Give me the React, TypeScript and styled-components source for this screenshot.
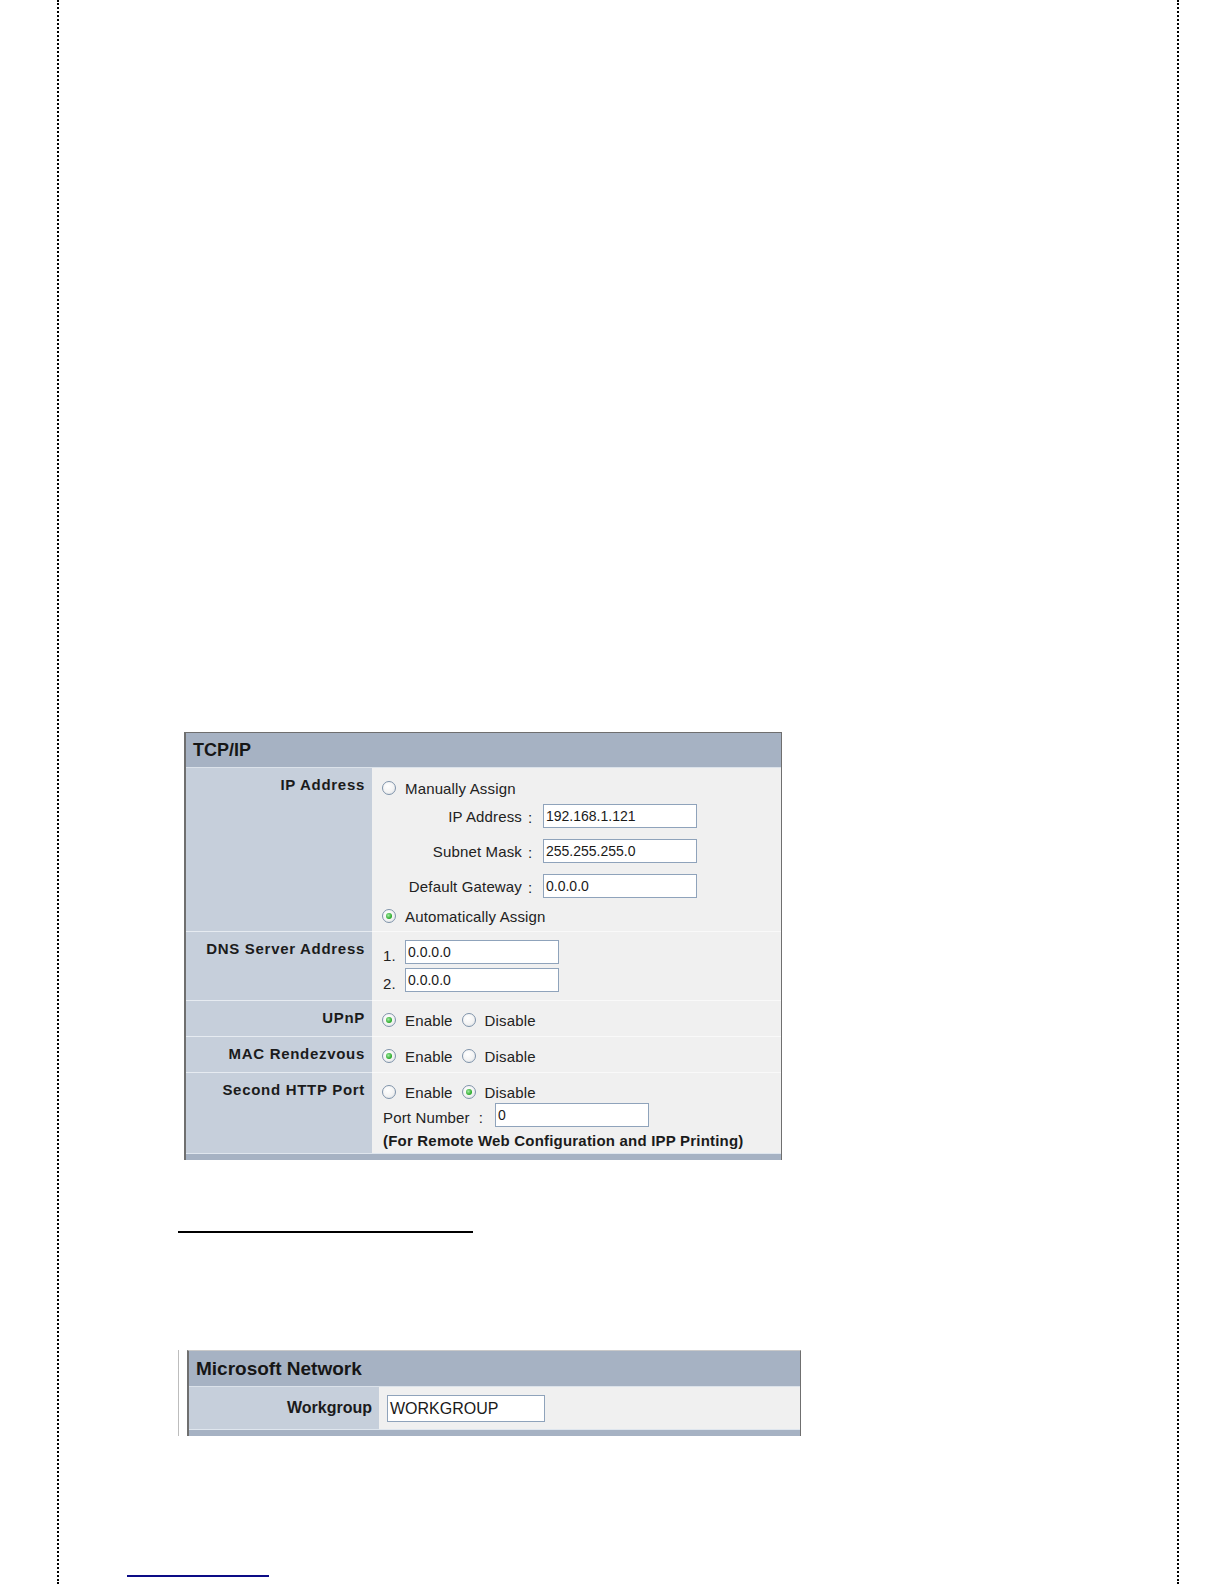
import React from "react";
import styled, { createGlobalStyle } from "styled-components";

const GlobalStyle = createGlobalStyle`
  html, body {
    margin: 0;
    padding: 0;
    background: #fff;
  }
  body {
    font-family: "Liberation Sans", Arial, sans-serif;
    color: #222;
  }
`;

const Sheet = styled.div`
  box-sizing: border-box;
  margin-left: 57px;
  width: 1122px;
  height: 1584px;
  border-left: 2px dotted #000;
  border-right: 2px dotted #000;
  padding: 732px 0 0 68px;
  overflow: hidden;
`;

const Panel = styled.div<{ $w: number; $ml: number; $topColor?: string }>`
  box-sizing: border-box;
  width: ${(p) => p.$w}px;
  margin-left: ${(p) => p.$ml}px;
  border: 1px solid #6f6f6f;
  border-left-width: 2px;
  border-top-color: ${(p) => p.$topColor || "#6f6f6f"};
  border-bottom: none;
`;

const TitleBar = styled.div<{ $h: number; $size: number }>`
  height: ${(p) => p.$h}px;
  line-height: ${(p) => p.$h}px;
  padding-left: 7px;
  background: #a6b2c3;
  border-bottom: 1px solid #dbe2ea;
  font-size: ${(p) => p.$size}px;
  font-weight: 700;
  color: #161616;
`;

const LabelCell = styled.div<{ $pt?: number; $size?: number; $ls?: number }>`
  background: #c6cfdb;
  text-align: right;
  padding: ${(p) => p.$pt ?? 8}px 7px 0 0;
  font-size: ${(p) => p.$size ?? 15}px;
  letter-spacing: ${(p) => p.$ls ?? 0.7}px;
  line-height: 18px;
  font-weight: 700;
  color: #1b1b1b;
  white-space: nowrap;
`;

const ValueCell = styled.div<{ $pad: string }>`
  background: #f0f0f0;
  padding: ${(p) => p.$pad};
  font-size: 15px;
  letter-spacing: 0.15px;
  color: #222;
`;

const Row = styled.div<{ $label: number }>`
  display: grid;
  grid-template-columns: ${(p) => p.$label}px 1fr;

  & + & > ${LabelCell} {
    border-top: 1px solid #e6ebf1;
  }
  & + & > ${ValueCell} {
    border-top: 1px solid #f9f9f9;
  }
`;

const BottomBar = styled.div`
  height: 6px;
  border-top: 1px solid #dfe6ee;
  background: #a6b2c3;
`;

const RadioLine = styled.div<{ $mt?: number }>`
  display: flex;
  align-items: center;
  height: 22px;
  margin-top: ${(p) => p.$mt ?? 0}px;
`;

const Option = styled.label`
  display: inline-flex;
  align-items: center;
  gap: 9px;
  margin-right: 10px;
  white-space: nowrap;
`;

const RadioDot = styled.span<{ $on?: boolean }>`
  position: relative;
  flex: none;
  box-sizing: border-box;
  width: 14px;
  height: 14px;
  margin-left: -1px;
  border-radius: 50%;
  border: 1px solid #7f93aa;
  background: radial-gradient(circle at 40% 35%, #fff 0, #f3f3f3 55%, #d6dbe1 100%);

  &::after {
    content: "";
    display: ${(p) => (p.$on ? "block" : "none")};
    position: absolute;
    left: 3px;
    top: 3px;
    width: 6px;
    height: 6px;
    border-radius: 50%;
    background: radial-gradient(circle at 40% 40%, #a4eaa4 0, #22a622 70%);
  }
`;

const FieldGrid = styled.div`
  display: grid;
  grid-template-columns: 139px 21px 154px;
  row-gap: 11px;
  align-items: center;
  margin-top: 5px;
`;

const FieldLabel = styled.span`
  text-align: right;
  white-space: nowrap;
`;

const Colon = styled.span<{ $m?: string }>`
  padding: ${(p) => p.$m ?? "4px 0 0 6px"};
  line-height: 18px;
`;

const TextBox = styled.div<{ $w: number; $h?: number; $size?: number }>`
  box-sizing: border-box;
  width: ${(p) => p.$w}px;
  height: ${(p) => p.$h ?? 24}px;
  line-height: ${(p) => (p.$h ?? 24) - 2}px;
  padding-left: 2px;
  border: 1px solid #8fa3bb;
  background: #fff;
  font-size: ${(p) => p.$size ?? 14}px;
  letter-spacing: 0;
  color: #1a1a1a;
  white-space: nowrap;
  overflow: hidden;
`;

const DnsLine = styled.div`
  display: flex;
  align-items: flex-end;

  & + & {
    margin-top: 4px;
  }
`;

const Num = styled.span`
  width: 22px;
  line-height: 16px;
`;

const PortLine = styled.div`
  display: flex;
  align-items: flex-end;
`;

const PortText = styled.span`
  line-height: 18px;
  white-space: nowrap;
`;

const Note = styled.div`
  margin-top: 3px;
  height: 22px;
  line-height: 22px;
  font-size: 15px;
  letter-spacing: 0.2px;
  font-weight: 700;
  color: #1b1b1b;
  white-space: nowrap;
`;

const Rule = styled.div`
  margin: 71px 0 0 51px;
  width: 295px;
  height: 2px;
  background: #000;
`;

const Figure = styled.div`
  margin: 117px 0 0 51px;
  padding-left: 8px;
  border-left: 1px solid #bdbdbd;
  width: fit-content;
`;

const LinkLine = styled.div`
  margin-top: 139px;
  width: 142px;
  height: 2px;
  background: #0c0c86;
`;

const Radio = ({ on, label }: { on?: boolean; label: string }) => (
  <Option>
    <RadioDot $on={on} />
    {label}
  </Option>
);

const fields = [
  { label: "IP Address", value: "192.168.1.121" },
  { label: "Subnet Mask", value: "255.255.255.0" },
  { label: "Default Gateway", value: "0.0.0.0" },
];

const App: React.FC = () => (
  <>
    <GlobalStyle />
    <Sheet>
      <Panel $w={598} $ml={57}>
        <TitleBar $h={34} $size={18}>
          TCP/IP
        </TitleBar>

        <Row $label={186}>
          <LabelCell>IP Address</LabelCell>
          <ValueCell $pad="9px 0 4px 11px">
            <RadioLine>
              <Radio label="Manually Assign" />
            </RadioLine>
            <FieldGrid>
              {fields.map((f) => (
                <React.Fragment key={f.label}>
                  <FieldLabel>{f.label}</FieldLabel>
                  <Colon>:</Colon>
                  <TextBox $w={154}>{f.value}</TextBox>
                </React.Fragment>
              ))}
            </FieldGrid>
            <RadioLine $mt={7}>
              <Radio on label="Automatically Assign" />
            </RadioLine>
          </ValueCell>
        </Row>

        <Row $label={186}>
          <LabelCell>DNS Server Address</LabelCell>
          <ValueCell $pad="8px 0 8px 11px">
            <DnsLine>
              <Num>1.</Num>
              <TextBox $w={154}>0.0.0.0</TextBox>
            </DnsLine>
            <DnsLine>
              <Num>2.</Num>
              <TextBox $w={154}>0.0.0.0</TextBox>
            </DnsLine>
          </ValueCell>
        </Row>

        <Row $label={186}>
          <LabelCell>UPnP</LabelCell>
          <ValueCell $pad="8px 0 5px 11px">
            <RadioLine>
              <Radio on label="Enable" />
              <Radio label="Disable" />
            </RadioLine>
          </ValueCell>
        </Row>

        <Row $label={186}>
          <LabelCell>MAC Rendezvous</LabelCell>
          <ValueCell $pad="8px 0 5px 11px">
            <RadioLine>
              <Radio on label="Enable" />
              <Radio label="Disable" />
            </RadioLine>
          </ValueCell>
        </Row>

        <Row $label={186}>
          <LabelCell>Second HTTP Port</LabelCell>
          <ValueCell $pad="8px 0 1px 11px">
            <RadioLine>
              <Radio label="Enable" />
              <Radio on label="Disable" />
            </RadioLine>
            <PortLine>
              <PortText>Port Number</PortText>
              <Colon $m="0 12px 0 9px">:</Colon>
              <TextBox $w={154}>0</TextBox>
            </PortLine>
            <Note>(For Remote Web Configuration and IPP Printing)</Note>
          </ValueCell>
        </Row>

        <BottomBar />
      </Panel>

      <Rule />

      <Figure>
        <Panel $w={614} $ml={0} $topColor="#c9c9c9">
          <TitleBar $h={35} $size={19}>
            Microsoft Network
          </TitleBar>
          <Row $label={190}>
            <LabelCell $pt={12} $size={16} $ls={0}>
              Workgroup
            </LabelCell>
            <ValueCell $pad="8px 0 7px 8px">
              <TextBox $w={158} $h={27} $size={16}>
                WORKGROUP
              </TextBox>
            </ValueCell>
          </Row>
          <BottomBar />
        </Panel>
      </Figure>

      <LinkLine />
    </Sheet>
  </>
);

export default App;
